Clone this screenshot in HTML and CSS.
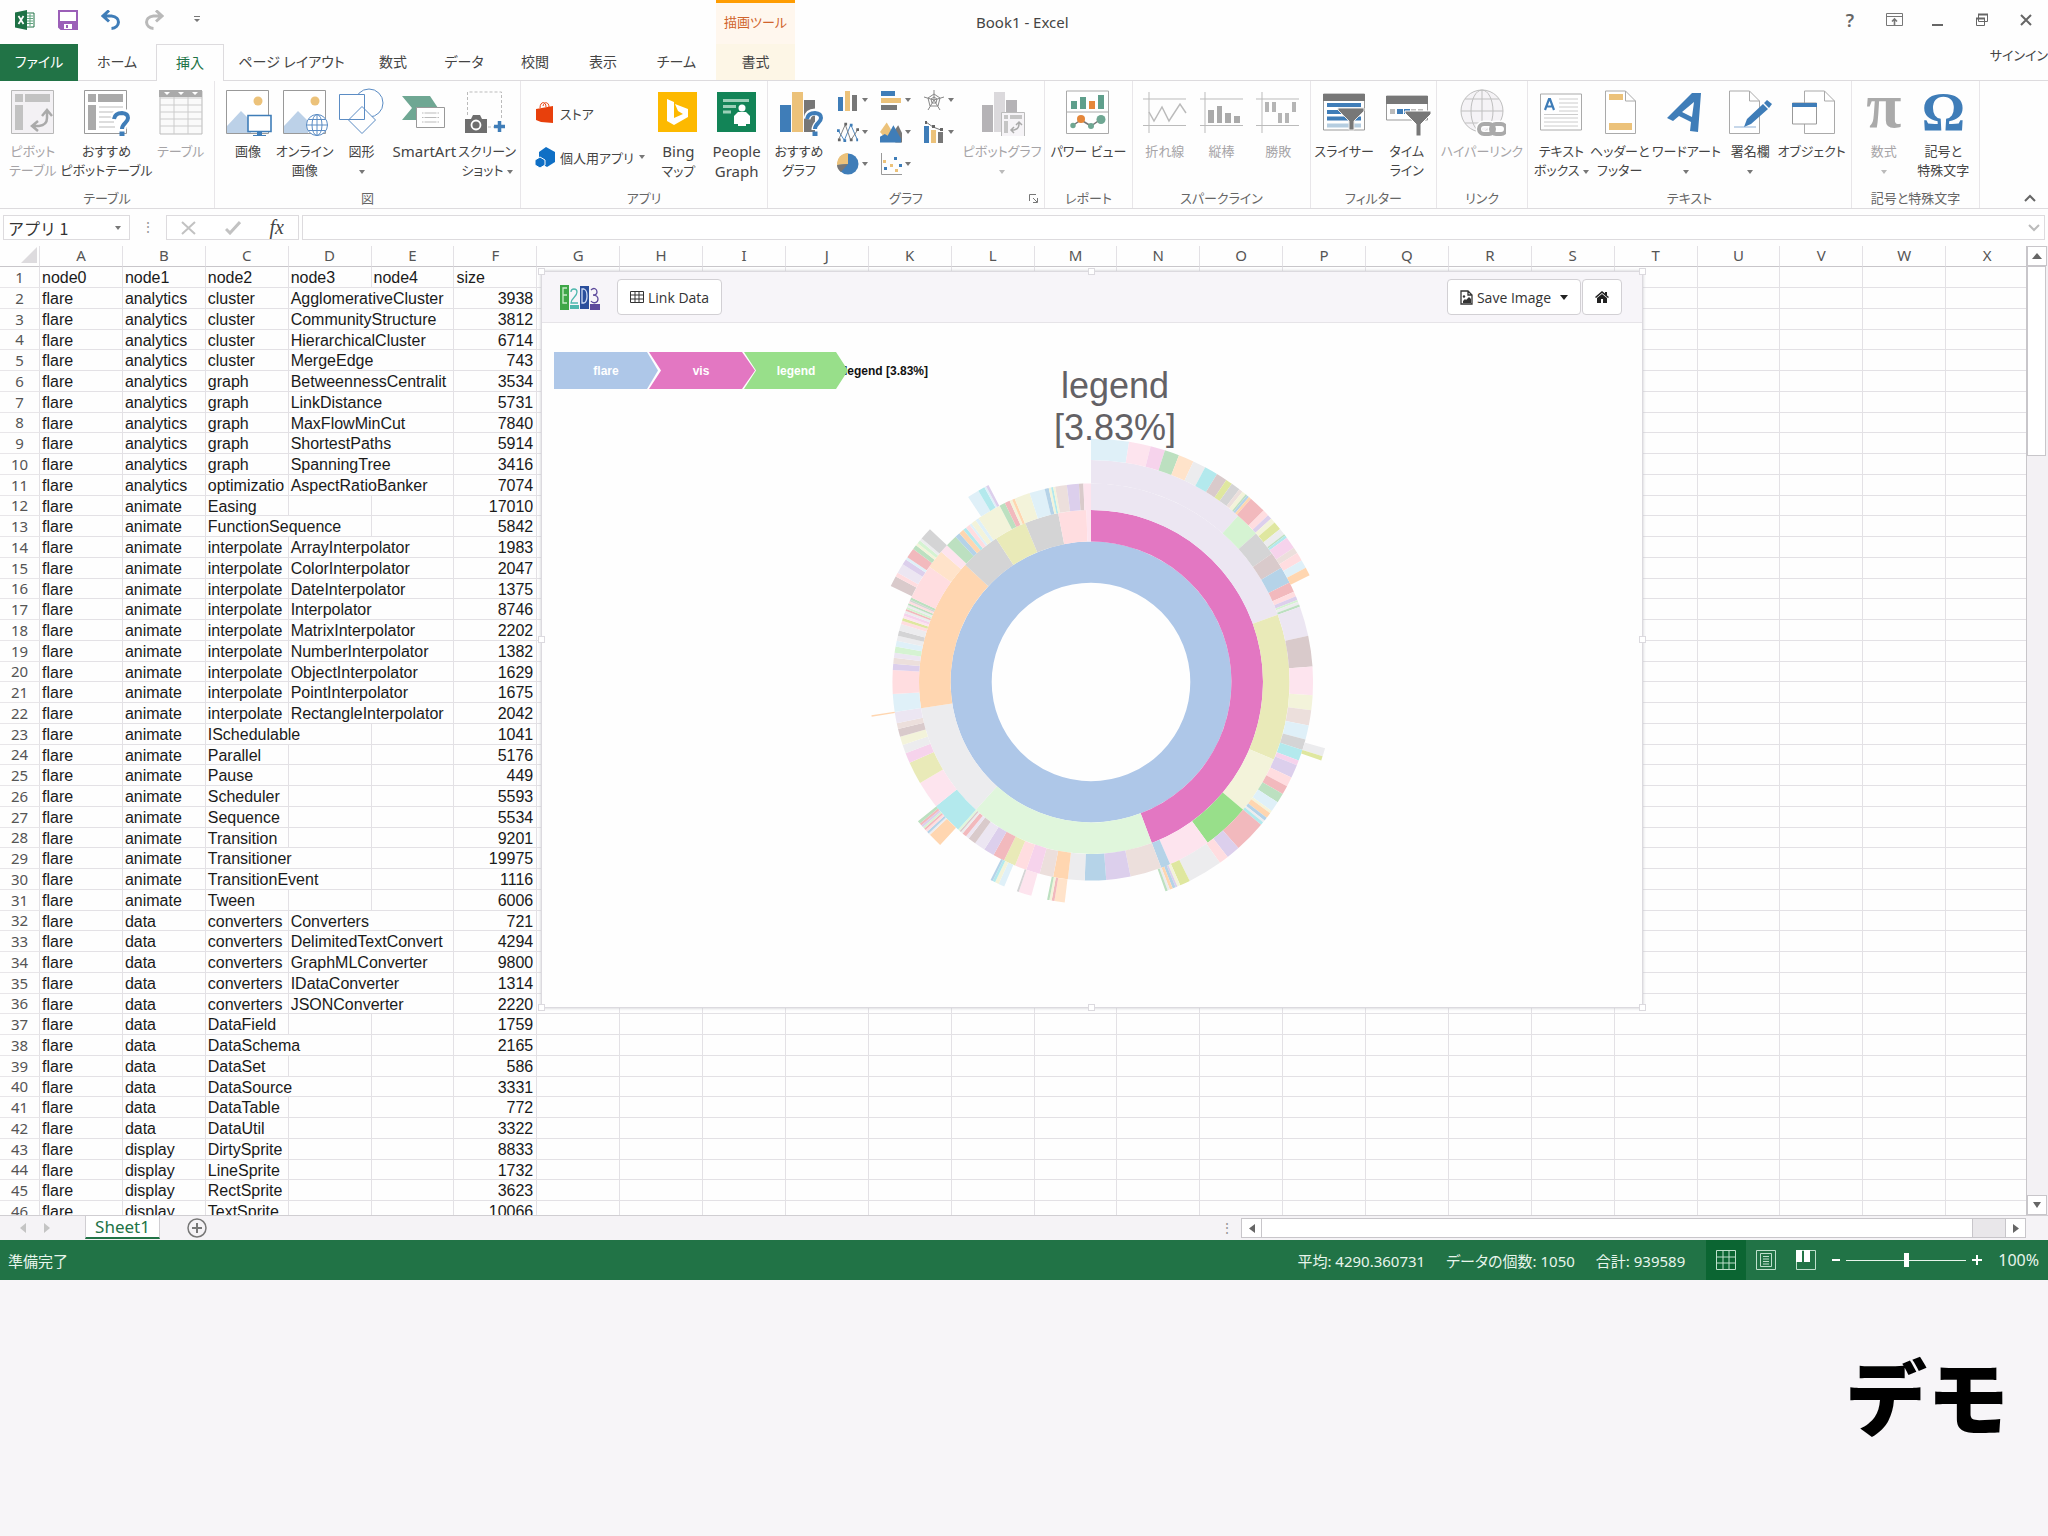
FILE: index.html
```html
<!DOCTYPE html>
<html lang="ja">
<head>
<meta charset="utf-8">
<title>Book1 - Excel</title>
<link rel="stylesheet" href="styles.css">
</head>
<body>
<div class="excel">
  <header class="titlebar">
    <div class="quick">
      <svg class="app-logo" width="20" height="20" viewBox="0 0 20 20"><path d="M11 3h8v14h-8z" fill="#fff" stroke="#217346"/><path d="M12 6h6M12 8.500h6M12 11h6M12 13.500h6M15 4v12" stroke="#5fa37e"/><path d="M0 2.500 12 0v20L0 17.500z" fill="#1e7145"/><path d="m3.500 6 5 8m0-8-5 8" stroke="#fff" stroke-width="1.700"/></svg>
      <button class="plain" aria-label="上書き保存"><svg width="20" height="20" viewBox="0 0 20 20"><path d="M1 1h18v18H3l-2-2z" fill="#fff" stroke="#9b5fb8" stroke-width="2"/><path d="M1 11h18v8H3l-2-2z" fill="#9b5fb8"/><path d="M6 14h8v5H6z" fill="#fff"/><path d="M8 15h2v3H8z" fill="#9b5fb8"/></svg></button>
      <button class="plain" aria-label="元に戻す"><svg width="20" height="20" viewBox="0 0 20 20" fill="none" stroke="#3f7db8" stroke-width="3"><path d="M2 6h8.500c10 1 8.500 12 0 12.500M8 0.500 2 6l6 5.500"/></svg></button>
      <button class="plain" aria-label="やり直し"><svg width="20" height="20" viewBox="0 0 20 20" fill="none" stroke="#b9b9b9" stroke-width="3"><path d="M18 6H9.500c-10 1-8.500 12 0 12.500M12 .500 18 6l-6 5.500"/></svg></button>
      <button class="plain" aria-label="カスタマイズ"><svg width="8" height="8" viewBox="0 0 8 8" fill="#777"><path d="M1 0h6v1H1zM1 3h6L4 6z"/></svg></button>
    </div>
    <div class="tool-title">描画ツール</div>
    <h1 class="doc-title">Book1 - Excel</h1>
    <div class="window-buttons">
      <button class="plain help" aria-label="ヘルプ">?</button>
      <button class="plain" aria-label="リボン表示"><svg width="17" height="14" viewBox="0 0 17 14" fill="none" stroke="#777"><path d="M.500.500h16v12H.500zM.500 3.500h16"/><path d="M8.500 12V6M6 8.500 8.500 6 11 8.500" stroke-width="1.600"/></svg></button>
      <button class="plain" aria-label="最小化"><svg width="14" height="14"><path d="M1 11h11v2H1z" fill="#666"/></svg></button>
      <button class="plain" aria-label="元に戻す (縮小)"><svg width="14" height="14" viewBox="0 0 14 14" fill="#fff" stroke="#666"><path d="M3.500 1.500h9v7h-9zM1.500 5.500h8v7h-8z"/><path d="M3 1.500h10M1 5.500h9" stroke-width="2"/></svg></button>
      <button class="plain" aria-label="閉じる"><svg width="14" height="14"><path d="m2 2 10 10M12 2 2 12" stroke="#666" stroke-width="2"/></svg></button>
    </div>
  </header>

  <nav class="tabs">
    <button class="tab file">ファイル</button>
    <button class="tab">ホーム</button>
    <button class="tab active">挿入</button>
    <button class="tab">ページ レイアウト</button>
    <button class="tab">数式</button>
    <button class="tab">データ</button>
    <button class="tab">校閲</button>
    <button class="tab">表示</button>
    <button class="tab">チーム</button>
    <button class="tab tool">書式</button>
    <a class="signin" href="#signin">サインイン</a>
  </nav>

  <div class="ribbon">
    <section class="group g-table">
      <div class="tools">
        <button class="tool-btn" disabled><svg class="icon" viewBox="0 0 48 48"><path d="M2.500 2.500h42v43h-42z" fill="#f3f1f4" stroke="#b8b8b8"/><path d="M6 6h8v8H6zM16 6h25v8H16zM6 17h8v25H6z" fill="#c2c2c2"/><path d="M24 38h6q8-1 8-8v-7M29 33l-6 5 6 5M33 28l5-6 5 6" fill="none" stroke="#aaa" stroke-width="2.500"/></svg>ピボット<br>テーブル</button>
        <button class="tool-btn"><svg class="icon" viewBox="0 0 48 48"><path d="M2.500 2.500h42v43h-42z" fill="#fff" stroke="#999"/><path d="M6 6h8v8H6zM16 6h25v8H16zM6 17h8v25H6z" fill="#aaa"/><path d="M17 19h24M17 24h24M17 29h15M17 34h15M17 39h16" stroke="#bbb"/><path d="M32 30q1-6 8-6 7 .500 7 6c0 5-6 5-6 10v1" fill="none" stroke="#fff" stroke-width="7"/><path d="M32 31q1-6 8-6 6 .500 6 5c0 5-6 5-6 11" fill="none" stroke="#3f7db8" stroke-width="4"/><path d="M37.500 43.500h5V48h-5z" fill="#3f7db8"/></svg>おすすめ<br>ピボットテーブル</button>
        <button class="tool-btn" disabled><svg class="icon" viewBox="0 0 48 48"><path d="M3 3h42v43H3z" fill="#fafafa" stroke="#bbb"/><path d="M3 10h42M3 17h42M3 24h42M3 31h42M3 38h42M17 9v37M31 9v37" stroke="#ccc"/><path d="M2 2h43v7H2z" fill="#aaa"/><path d="M7 4h6l-3 3zM21 4h6l-3 3zM35 4h6l-3 3z" fill="#fff"/></svg>テーブル</button>
      </div>
      <h2 class="group-name">テーブル</h2>
    </section>
    <section class="group g-image">
      <div class="tools">
        <button class="tool-btn"><svg class="icon" viewBox="0 0 48 48"><path d="M2.500 2.500h42v43h-42z" fill="#fff" stroke="#999"/><path d="M3 44V38l14-15 10 10v12H3z" fill="#bcd1e8"/><circle cx="34" cy="13" r="4.500" fill="#ecc27a"/><path d="M24 27.500h23v16H24z" fill="#fff" stroke="#3f7db8" stroke-width="1.600"/><path d="M33 44h5v3h4v1.500H29V47h4z" fill="#3f7db8"/></svg>画像</button>
        <button class="tool-btn"><svg class="icon" viewBox="0 0 48 48"><path d="M2.500 2.500h42v43h-42z" fill="#fff" stroke="#999"/><path d="M3 44V38l14-15 10 10v12H3z" fill="#bcd1e8"/><circle cx="34" cy="13" r="4.500" fill="#ecc27a"/><circle cx="36" cy="37" r="10.500" fill="#fff"/><g fill="none" stroke="#5b8cc4"><circle cx="36" cy="37" r="10.500"/><ellipse cx="36" cy="37" rx="5" ry="10.500"/><path d="M36 26v22M25.500 37h21M27.500 31.500h17M27.500 42.500h17"/></g></svg>オンライン<br>画像</button>
        <button class="tool-btn"><svg class="icon" viewBox="0 0 48 48" fill="#fff" stroke="#5b8cc4"><circle cx="31" cy="15" r="14"/><path d="M1.500 6.500h25v25h-25zM24 18.500l13.500 13.500L24 45.500 10.500 32z"/></svg>図形<br><i class="caret"></i></button>
        <button class="tool-btn"><svg class="icon" viewBox="0 0 48 48"><path d="M2 8h28l8 12-8 12H2l10-12z" fill="#6fa793"/><path d="M16.500 19.500h28v20h-28z" fill="#fff" stroke="#999"/><path d="M22 25h17M22 29.500h17M22 34h17" stroke="#bbb" stroke-dasharray="1.500 1 12 1"/></svg><span class="latin">SmartArt</span></button>
        <button class="tool-btn"><svg class="icon" viewBox="0 0 48 48"><path d="M38.500 30V4h-34v24M25 39h12" fill="none" stroke="#bbb" stroke-dasharray="3 2"/><path d="M2 31h6l2-4h7l2 4h5v14H2z" fill="#6e6e6e"/><circle cx="13" cy="37" r="4.500" fill="none" stroke="#fff" stroke-width="1.800"/><path d="M36.500 33v11M31 38.500h11" stroke="#3f7db8" stroke-width="3.500"/></svg>スクリーン<br>ショット <i class="caret"></i></button>
      </div>
      <h2 class="group-name">図</h2>
    </section>
    <section class="group g-app">
      <div class="tools">
        <div class="stack">
          <button class="line-btn"><svg width="20" height="24" viewBox="0 0 20 24"><path d="M1 8l17-3v17l-12-1-5-2z" fill="#e8400c"/><path d="M5 7c0-7 6-7 6-1M8 5c1-5 6-4 6 1" fill="none" stroke="#e8400c"/></svg>ストア</button>
          <button class="line-btn"><svg width="20" height="22" viewBox="0 0 20 22" fill="#0f6fc5"><path d="m11 1 9 5v10l-8 5-8-5V6z"/><path d="m5 11 5 3v5l-5 3-5-3v-5z" stroke="#fff"/></svg>個人用アプリ <i class="caret"></i></button>
        </div>
        <button class="tool-btn"><svg class="icon" viewBox="0 0 48 48"><path d="M4 4h39v40H4z" fill="#fdb900"/><path d="m13 11 7 3v16l9-4-5-3-3-7 13 5v8L20 37l-7-4z" fill="#fff"/></svg><span class="latin">Bing</span><br>マップ</button>
        <button class="tool-btn"><svg class="icon" viewBox="0 0 48 48"><path d="M4 4h39v40H4z" fill="#128457"/><path d="M10 11h26v3H10zM10 17h13v3H10zM10 22.500h8v3h-8z" fill="#9bd0b8"/><circle cx="29" cy="20" r="3.500" fill="#fff"/><path d="M25 24h8l4 4v8h-4v2h-8v-2h-4v-8z" fill="#fff"/></svg><span class="latin">People<br>Graph</span></button>
      </div>
      <h2 class="group-name">アプリ</h2>
    </section>
    <section class="group g-chart">
      <div class="tools">
        <button class="tool-btn"><svg class="icon" viewBox="0 0 48 48"><path d="M5 17h11v27H5z" fill="#3f7db8"/><path d="M17 4h11v40H17z" fill="#ecc27a"/><path d="M29 12h11v32H29z" fill="#777"/><path d="M32 31q1-7 8-7 7 .500 6 6c0 5-6 5-6 12" fill="none" stroke="#fff" stroke-width="7"/><path d="M32 31q1-6 8-6 6 .500 6 5c0 5-6 5-6 11" fill="none" stroke="#3f7db8" stroke-width="4"/><path d="M37.500 43.500h5V48h-5z" fill="#3f7db8"/></svg>おすすめ<br>グラフ</button>
        <div class="mini-grid">
          <button class="mini" aria-label="縦棒"><svg width="22" height="22"><path d="M1 8h5v14H1z" fill="#3f7db8"/><path d="M8 2h5v20H8z" fill="#ecc27a"/><path d="M15 6h5v16h-5z" fill="#777"/></svg><i class="caret"></i></button>
          <button class="mini" aria-label="横棒"><svg width="22" height="22"><path d="M1 2h14v5H1z" fill="#3f7db8"/><path d="M1 9h20v5H1z" fill="#ecc27a"/><path d="M1 16h16v5H1z" fill="#777"/></svg><i class="caret"></i></button>
          <button class="mini" aria-label="レーダー"><svg width="22" height="22" fill="none" stroke="#888"><path d="M11 1v10L1 8M11 11l10-3M11 11l6 10M11 11 5 21M11 5l6 4-2 8H7L5 9zM11 8l3 2-1 4H9l-1-4z"/></svg><i class="caret"></i></button>
          <button class="mini" aria-label="折れ線"><svg width="22" height="22" viewBox="0 0 24 22" fill="none"><path d="m1 9 7 11 7-17 7 16" stroke="#3f7db8"/><path d="m2 19 7-16 6 17 8-12" stroke="#777"/><path d="M0 8h3v3H0zM7 19h3v3H7zM14 2h3v3h-3zM21 18h2v3h-2z" fill="#3f7db8"/><path d="M1 18h3v3H1zM8 1h3v3H8zM14 18h3v3h-3zM21 7h3v3h-3z" fill="#666"/></svg><i class="caret"></i></button>
          <button class="mini" aria-label="面"><svg width="22" height="22" viewBox="0 0 23 22"><path d="m16 8 3-4 4 8v10h-7z" fill="#777"/><path d="m0 11 7-10 6 10-6 8z" fill="#ecc27a"/><path d="M0 22v-6l5-3 3 2 6-11 8 14v4z" fill="#3f7db8"/></svg><i class="caret"></i></button>
          <button class="mini" aria-label="複合"><svg width="22" height="22"><path d="M1 5h5v17H1z" fill="#3f7db8"/><path d="M8 9h5v13H8z" fill="#ecc27a"/><path d="M15 11h5v11h-5z" fill="#777"/><path d="m3 1 7 5 8 3" stroke="#777" fill="none"/><path d="M2 0h2v3H2zM9 4h3v3H9zM17 7h3v3h-3z" fill="#666"/></svg><i class="caret"></i></button>
          <button class="mini" aria-label="円"><svg width="22" height="22"><circle cx="11" cy="11" r="10.500" fill="#3f7db8"/><path d="M11 11V0A11 11 0 0 0 0 12z" fill="#ecc27a"/><path d="M11 11 0 12q0 4 4 7z" fill="#777"/></svg><i class="caret"></i></button>
          <button class="mini" aria-label="散布図"><svg width="22" height="22"><path d="M1.500 0v21.500H22" stroke="#999" fill="none"/><path d="M14 4h3v3h-3zM4 14h3v3H4zM19 11h3v3h-3z" fill="#3f7db8"/><path d="M3 7h3v3H3zM10 11h3v3h-3zM15 16h3v3h-3z" fill="#ecc27a"/></svg><i class="caret"></i></button>
        </div>
        <button class="tool-btn" disabled><svg class="icon" viewBox="0 0 48 48"><path d="M4 17h11v27H4z" fill="#b5b3b6"/><path d="M16 4h11v40H16z" fill="#dbd9dc"/><path d="M28 12h11v14H28z" fill="#b5b3b6"/><path d="M23.500 24.500h23v24h-23z" fill="#f6f4f7" stroke="#bbb"/><path d="M26 27h4v4h-4zM32 27h12v4H32zM26 33h4v12h-4z" fill="#c5c5c5"/><path d="M33 42h3q5-1 5-6v-1M36 39l-3 3 3 3M38 37l3-3 3 3" fill="none" stroke="#aaa" stroke-width="1.500"/></svg>ピボットグラフ<br><i class="caret"></i></button>
      </div>
      <h2 class="group-name">グラフ</h2>
      <button class="plain launcher" aria-label="すべてのグラフ"><svg width="9" height="9" viewBox="0 0 9 9" fill="none" stroke="#777"><path d="M.500 7V.500H7M4 4l4 4M8.500 4v4.500H4"/></svg></button>
    </section>
    <section class="group g-report">
      <div class="tools">
        <button class="tool-btn"><svg class="icon" viewBox="0 0 48 48"><path d="M2.500 3h42v42.500h-42zM2.500 24h42" fill="#fff" stroke="#aaa"/><path d="M7 13h6v8H7zM16 9h6v12h-6zM34 7h6v14h-6z" fill="#5f9f8c"/><path d="M25 13h6v8h-6z" fill="#e5873a"/><path d="m8 38 9-6 10 6 10-7" fill="none" stroke="#777" stroke-width="1.500"/><g fill="#6fa793"><circle cx="9" cy="37.500" r="2.700"/><circle cx="27" cy="38" r="3"/><circle cx="37" cy="31.500" r="4.500"/></g><circle cx="17" cy="31" r="4" fill="#e5873a"/></svg>パワー ビュー</button>
      </div>
      <h2 class="group-name">レポート</h2>
    </section>
    <section class="group g-spark">
      <div class="tools">
        <button class="tool-btn" disabled><svg class="icon" viewBox="0 0 48 48" fill="none" stroke="#bbb"><path d="M2 11h43M2 37.500h43M8 4v41"/><path d="m8 24 5 9 8-14 7 14 11-17 6 9" stroke-width="1.500"/></svg>折れ線</button>
        <button class="tool-btn" disabled><svg class="icon" viewBox="0 0 48 48"><path d="M3 11h43M3 37.500h43M8 4v41" stroke="#bbb"/><path d="M11 22h6v13h-6zM20 18h5v17h-5zM28 25h6v10h-6zM37 28h6v7h-6z" fill="#aaa"/></svg>縦棒</button>
        <button class="tool-btn" disabled><svg class="icon" viewBox="0 0 48 48"><path d="M2 11h43M2 37.500h43M8 4v41" stroke="#bbb"/><path d="M11 14h4v10h-4zM18 14h4v10h-4zM24 25h4v10h-4zM31 25h4v10h-4zM38 14h4v10h-4z" fill="#b5b5b5"/></svg>勝敗</button>
      </div>
      <h2 class="group-name">スパークライン</h2>
    </section>
    <section class="group g-filter">
      <div class="tools">
        <button class="tool-btn"><svg class="icon" viewBox="0 0 48 48"><path d="M3.500 6h41v36h-41z" fill="#fff" stroke="#999"/><path d="M3 6h42v7H3z" fill="#777"/><path d="M7 15h34v4H7zM7 22h34v4H7zM7 28.500h34v4H7z" fill="#3f7db8"/><path d="M7 35.500h34v4H7z" fill="#b5cde0"/><path d="M18 20h26v3L34 33v9h-5v-9L18 22z" fill="#777" stroke="#e8e8e8"/></svg>スライサー</button>
        <button class="tool-btn"><svg class="icon" viewBox="0 0 48 48"><path d="M3.500 8h41v24h-41z" fill="#fff" stroke="#999"/><path d="M3 8h42v8H3z" fill="#777"/><path d="M7 21h5v5H7zM28 21h5v5h-5zM35 21h5v5h-5z" fill="#bbb"/><path d="M14 21h6v5h-6zM21 21h6v5h-6z" fill="#3f7db8"/><path d="M22 23h26v3L38 36v12h-5V36L22 25z" fill="#777" stroke="#fff"/></svg>タイム<br>ライン</button>
      </div>
      <h2 class="group-name">フィルター</h2>
    </section>
    <section class="group g-link">
      <div class="tools">
        <button class="tool-btn" disabled><svg class="icon" viewBox="0 0 48 48"><g fill="none" stroke="#bfbfbf"><circle cx="24" cy="23" r="21" fill="#f5f3f6"/><ellipse cx="24" cy="23" rx="11" ry="21"/><path d="M24 2v42M3 23h42M7 11h34M7 35h34"/></g><g fill="none" stroke="#fff" stroke-width="7"><rect x="21" y="36" width="15" height="10" rx="5"/><rect x="33" y="36" width="15" height="10" rx="5"/></g><g fill="none" stroke="#aaa" stroke-width="4"><rect x="21" y="36" width="15" height="10" rx="5"/><rect x="33" y="36" width="15" height="10" rx="5"/></g></svg>ハイパーリンク</button>
      </div>
      <h2 class="group-name">リンク</h2>
    </section>
    <section class="group g-text">
      <div class="tools">
        <button class="tool-btn"><svg class="icon" viewBox="0 0 48 48"><path d="M3.500 6h41v36h-41z" fill="#fff" stroke="#aaa"/><path d="M22 11h19M22 15h19M22 19h19M22 23h19M7 26.500h34M7 30h34M7 34h34M7 38h34" stroke="#ccc"/><path d="m8 22 4-11h1l4 11M9.500 18.500h6" fill="none" stroke="#3f7db8" stroke-width="2.200"/></svg>テキスト<br>ボックス <i class="caret"></i></button>
        <button class="tool-btn"><svg class="icon" viewBox="0 0 48 48"><path d="M9.500 3h20l10 10v32.500h-30z" fill="#fff" stroke="#aaa"/><path d="M29.500 3v10h10" fill="none" stroke="#aaa"/><path d="M13 6h14v6H13zM13 35h23v7H13z" fill="#ecc27a"/></svg>ヘッダーと<br>フッター</button>
        <button class="tool-btn"><svg class="icon" viewBox="0 0 48 48"><path d="M5 30 30 5h9l-3 39-8-1 1-9-12-6-6 5zM20 24l10 5 2-15z" fill="#3f7db8" fill-rule="evenodd"/></svg>ワードアート<br><i class="caret"></i></button>
        <button class="tool-btn"><svg class="icon" viewBox="0 0 48 48"><path d="M3.500 3h20l10 10v32.500h-30z" fill="#fff" stroke="#aaa"/><path d="M23.500 3v10h10" fill="none" stroke="#aaa"/><path d="M8 39h22" stroke="#8fb0d5"/><path d="m18 39 3-8 16-15 5 5-17 15zM38 15l3-3 5 4-3 4z" fill="#3f7db8"/></svg>署名欄<br><i class="caret"></i></button>
        <button class="tool-btn"><svg class="icon" viewBox="0 0 48 48"><path d="M16.500 3h20l10 10v32.500h-30z" fill="#fff" stroke="#aaa"/><path d="M36.500 3v10h10" fill="none" stroke="#aaa"/><path d="M4.500 15h24v21h-24z" fill="#fff" stroke="#999"/><path d="M4 15h25v4H4z" fill="#3f7db8"/></svg>オブジェクト</button>
      </div>
      <h2 class="group-name">テキスト</h2>
    </section>
    <section class="group g-symbol">
      <div class="tools">
        <button class="tool-btn" disabled><span class="glyph">π</span>数式<br><i class="caret"></i></button>
        <button class="tool-btn"><span class="glyph omega">Ω</span>記号と<br>特殊文字</button>
      </div>
      <h2 class="group-name">記号と特殊文字</h2>
    </section>
    <div class="collapse"><button class="plain" aria-label="リボンを折りたたむ"><svg width="12" height="8"><path d="m1 7 5-5 5 5" fill="none" stroke="#666" stroke-width="2"/></svg></button></div>
  </div>

  <div class="formula-bar">
    <div class="name-box"><input class="name-input" aria-label="名前ボックス" value="アプリ 1"><i class="caret"></i></div>
    <span class="grip">⋮</span>
    <div class="fx-box">
      <button class="plain" aria-label="キャンセル"><svg width="15" height="14"><path d="m1 1 13 12M14 1 1 13" stroke="#c2c2c2" stroke-width="2"/></svg></button>
      <button class="plain" aria-label="入力"><svg width="16" height="14"><path d="m1 8 4 4L15 1" fill="none" stroke="#c2c2c2" stroke-width="3"/></svg></button>
      <button class="plain fx" aria-label="関数の挿入">fx</button>
    </div>
    <div class="formula"><input class="formula-input" aria-label="数式バー"><svg width="12" height="8"><path d="m1 1 5 5 5-5" fill="none" stroke="#bbb" stroke-width="2"/></svg></div>
  </div>

  <div class="sheet-area">
    <div class="sheet">
      <table class="grid">
        <thead id="columns"></thead>
        <tbody id="rows"></tbody>
      </table>
      <div class="chart">
        <div class="chart-bar">
          <svg class="e2d3" width="40" height="26" viewBox="0 0 40 26"><path d="M0 1h9v25H0z" fill="#3fa648"/><path d="M10 21h9v4h-9z" fill="#4fb8ae"/><path d="M20 2h9v23h-9z" fill="#2b4f9c"/><path d="M30 20h10v6H30z" fill="#5d4a9c"/><g fill="none" stroke-width="1.300"><path d="M7 4H3v15h4M3 11h4" stroke="#c8ecc8"/><path d="M11 8c0-4 6-4 6 0 0 5-6 6-6 11h7" stroke="#4fb8ae"/><path d="M22 5h2q3 1 3 7t-3 7h-2z" stroke="#cfdcf5"/><path d="M31 6c3-3 6-1 6 2s-2 3-4 3c3 0 5 2 5 4 0 4-5 5-7 2" stroke="#5d4a9c"/></g></svg>
          <button class="chart-btn"><svg width="14" height="12" viewBox="0 0 14 12" fill="none" stroke="#333"><path d="M.500.500h13v11H.500zM.500 4h13M.500 8h13M5 0v12M9 0v12"/></svg>Link Data</button>
          <div class="chart-actions">
            <button class="chart-btn"><svg width="13" height="15" viewBox="0 0 13 15"><path d="M1 1h7l4 4v9H1zM8 1v4h4" fill="none" stroke="#333" stroke-width="1.300"/><path d="M3 13v-2l2-2 1 1 3-3 2 2v4z" fill="#333"/><circle cx="4" cy="6.500" r="1.200" fill="#333"/></svg>Save Image<i class="caret big"></i></button>
            <button class="chart-btn home" aria-label="ホーム"><svg width="14" height="12" viewBox="0 0 14 12" fill="#222"><path d="m7 0 3 2.600V1h2v3.500L14 6l-1 1-6-5-6 5-1-1z"/><path d="m2 7 5-4 5 4v5H8V8H6v4H2z"/></svg></button>
          </div>
        </div>
        <svg class="plot" viewBox="0 0 1100 684" role="img" aria-label="サンバースト">
          <g id="sunburst"></g>
          <text class="crumb total" x="302" y="52">legend [3.83%]</text>
          <path d="M12 29h93l11 18.500L105 66H12z" fill="#aec7e8"/>
          <path d="M107 29h93l13 18.500L200 66h-93l12-18.500z" fill="#e377c2"/>
          <path d="M202 29h92l12 18.500L294 66h-92l12-18.500z" fill="#98df8a"/>
          <text class="crumb" x="64" y="52">flare</text>
          <text class="crumb" x="159" y="52">vis</text>
          <text class="crumb" x="254" y="52">legend</text>
          <text class="focus" x="573" y="75">legend</text>
          <text class="focus" x="573" y="117">[3.83%]</text>
        </svg>
        <i class="handle nw"></i><i class="handle n"></i><i class="handle ne"></i><i class="handle w"></i><i class="handle e"></i><i class="handle sw"></i><i class="handle s"></i><i class="handle se"></i>
      </div>
    </div>
    <div class="vscroll">
      <button class="arrow-btn" aria-label="上へ"><svg width="10" height="6"><path d="M0 6h10L5 0z" fill="#666"/></svg></button>
      <div class="vthumb"></div>
      <button class="arrow-btn last" aria-label="下へ"><svg width="8" height="6"><path d="M0 0h8L4 6z" fill="#666"/></svg></button>
    </div>
  </div>

  <div class="sheet-tabs">
    <div class="sheet-nav"><svg width="6" height="10"><path d="M6 0v10L0 5z" fill="#c4c4c4"/></svg><svg width="6" height="10"><path d="M0 0v10l6-5z" fill="#c4c4c4"/></svg></div>
    <button class="sheet-tab">Sheet1</button>
    <button class="plain add" aria-label="新しいシート"><svg width="20" height="20" fill="none" stroke="#777"><circle cx="10" cy="10" r="9" stroke-width="1.500"/><path d="M10 5v10M5 10h10" stroke-width="2"/></svg></button>
    <span class="grip">⋮</span>
    <div class="hscroll">
      <button class="arrow-btn" aria-label="左へ"><svg width="6" height="9"><path d="M6 0v9L0 4.500z" fill="#666"/></svg></button>
      <div class="hthumb"></div>
      <button class="arrow-btn last" aria-label="右へ"><svg width="6" height="9"><path d="M0 0v9l6-4.500z" fill="#666"/></svg></button>
    </div>
  </div>

  <footer class="status">
    <span class="ready">準備完了</span>
    <span>平均: 4290.360731</span>
    <span>データの個数: 1050</span>
    <span>合計: 939589</span>
    <div class="view-tools">
      <button class="view on" aria-label="標準"><svg width="20" height="20" fill="none" stroke="#bfe0cc"><path d="M.500.500h19v19H.500zM.500 7h19M.500 13h19M7 0v20M13 0v20"/></svg></button>
      <button class="view" aria-label="ページ レイアウト"><svg width="20" height="20" fill="none" stroke="#bfe0cc"><path d="M.500.500h19v19H.500zM4.500 3.500h11v13h-11zM7 6.500h6M7 9h6M7 11.500h6M7 14h6"/></svg></button>
      <button class="view" aria-label="改ページ"><svg width="20" height="20" fill="none" stroke="#bfe0cc"><path d="M.500.500h19v19H.500z"/><path d="M0 0h6v12H0zM8 0h6v12H8z" fill="#fff" stroke="none"/></svg></button>
      <button class="zoom-btn" aria-label="縮小"><svg width="8" height="10"><path d="M0 4h8v2H0z" fill="#fff"/></svg></button>
      <input class="zoom" type="range" min="0" max="100" value="50" aria-label="ズーム">
      <button class="zoom-btn" aria-label="拡大"><svg width="10" height="10"><path d="M4 0h2v4h4v2H6v4H4V6H0V4h4z" fill="#fff"/></svg></button>
      <span class="percent">100%</span>
    </div>
  </footer>
</div>
<p class="caption">デモ</p>
<script src="script.js"></script>
</body>
</html>
```
FILE: styles.css
```css
* { box-sizing: border-box; }
body {
  margin: 0;
  background: #f7f5f8;
  color: #444;
  font-family: "Noto Sans", "Noto Sans CJK JP", sans-serif;
  font-size: 14px;
  font-feature-settings: "palt";
}
button, input { font: inherit; font-feature-settings: inherit; color: inherit; }
h1, h2, p { margin: 0; font-weight: 400; }
svg { display: block; flex: none; }
.plain { border: 0; padding: 0; background: none; display: flex; align-items: center; justify-content: center; }
.excel { background: #fefefe; overflow: hidden; }

/* title bar */
.titlebar { display: grid; grid-template-columns: 716px 79px 1fr auto; height: 44px; }
.quick { display: flex; align-items: center; gap: 23px; padding: 0 0 4px 15px; }
.quick .plain:last-child { margin-left: 6px; }
.tool-title { border-top: 3px solid #ff9c00; background: #fff7ee; color: #d0642c; text-align: center; line-height: 38px; font-size: 13px; white-space: nowrap; }
.doc-title { padding-left: 181px; font-size: 15px; line-height: 44px; }
.window-buttons { display: flex; align-items: center; gap: 12px; padding: 0 6px 4px 0; }
.window-buttons .plain { width: 32px; height: 24px; }
.window-buttons .help { font-size: 18px; font-weight: 600; color: #666; }

/* ribbon tabs */
.tabs { display: flex; height: 37px; border-bottom: 1px solid #dddbde; }
.tab { border: 0; background: none; padding: 0 0 3px; height: 37px; width: 68px; flex: none; white-space: nowrap; }
.tab:nth-child(1), .tab:nth-child(2) { width: 78px; }
.tab:nth-child(4) { width: 135px; }
.tab:nth-child(6) { width: 74px; }
.tab:nth-child(9), .tab:nth-child(10) { width: 79px; }
.tab.file { background: #217346; color: #fff; }
.tab.active { background: #fefefe; color: #217346; border: 1px solid #dddbde; border-bottom: 0; }
.tab.tool { height: 36px; background: #fdf6e6; }
.signin { margin-left: auto; color: #444; text-decoration: none; line-height: 22px; font-size: 13px; white-space: nowrap; }

/* ribbon */
.ribbon {
  display: grid;
  grid-template-columns: 215fr 306fr 247fr 277fr 88fr 178fr 126fr 91fr 324fr 128fr 68fr;
  grid-template-rows: 100%;
  height: 128px;
  border-bottom: 1px solid #dddbde;
  font-size: 13px;
}
.group { position: relative; display: flex; flex-direction: column; min-width: 0; border-right: 1px solid #e8e6e9; }
.tools { display: grid; flex: 1; }
.g-table .tools { grid-template-columns: 66fr 82fr 67fr; }
.g-image .tools { grid-template-columns: 66fr 48fr 66fr 60fr 66fr; }
.g-app .tools { grid-template-columns: 130fr 56fr 61fr; }
.g-chart .tools { grid-template-columns: 65fr 130fr 76fr 6fr; }
.g-spark .tools { grid-template-columns: 64fr 50fr 64fr; }
.g-filter .tools { grid-template-columns: 67fr 59fr; }
.g-text .tools { grid-template-columns: 67fr 50fr 84fr 44fr 79fr; }
.g-symbol .tools { grid-template-columns: 64fr 56fr 8fr; }
.tool-btn {
  display: flow-root; align-self: start; justify-self: center;
  width: max-content; margin: 0 -30px; padding: 7px 0 0;
  border: 0; background: none;
  line-height: 19px; white-space: nowrap; text-align: center;
}
.tool-btn:disabled { color: #a6a4a7; }
.tool-btn:disabled .caret { opacity: .5; }
.latin { font-size: 15px; }
.icon { width: 48px; height: 48px; margin: 0 auto 6px; }
.glyph { display: block; height: 48px; margin-bottom: 6px; font: 700 64px/36px "Liberation Serif", serif; color: #aaa; }
.glyph.omega { color: #3f7db8; font-size: 54px; line-height: 48px; }
.caret { display: inline-block; border: 3px solid transparent; border-top: 4px solid #777; border-bottom: 0; vertical-align: middle; flex: none; }
.caret.big { border-width: 5px 4px 0; border-top-color: #222; }
.group-name { font-size: 13px; line-height: 20px; text-align: center; color: #666; }
.stack { display: flex; flex-direction: column; padding: 17px 0 0 14px; gap: 14px; }
.line-btn { display: flex; align-items: center; gap: 5px; height: 30px; border: 0; padding: 0; background: none; white-space: nowrap; }
.mini-grid { display: grid; grid-template-columns: repeat(3, 43px); grid-template-rows: repeat(3, 32px); padding: 3px 0 0 7px; align-content: start; }
.mini { display: flex; align-items: center; gap: 3px; border: 0; padding: 0; background: none; }
.launcher { position: absolute; right: 6px; bottom: 5px; }
.collapse { display: flex; align-items: flex-end; justify-content: flex-end; padding: 0 12px 6px 0; }

/* formula bar */
.formula-bar { display: flex; height: 37px; padding: 6px 3px 6px 3px; }
.name-box, .fx-box, .formula { display: flex; align-items: center; border: 1px solid #dddbde; background: #fff; }
.name-box { width: 127px; padding-right: 8px; }
.name-input { width: 100%; min-width: 0; border: 0; padding: 0 4px; background: none; font: 16px/22px "Noto Sans CJK JP", sans-serif; font-feature-settings: normal; color: #333; }
.grip { color: #999; width: 36px; text-align: center; line-height: 24px; }
.fx-box { width: 133px; justify-content: space-between; padding: 0 14px; }
.fx { font: italic 20px "Liberation Serif", serif; color: #444; }
.formula { flex: 1; margin-left: 3px; padding-right: 4px; }
.formula-input { flex: 1; border: 0; padding: 0 4px; background: none; }

/* sheet */
.sheet-area { display: flex; height: 970px; border-bottom: 1px solid #d0ced2; }
.sheet { position: relative; flex: 1; min-width: 0; overflow: hidden; }
.grid { width: calc(100% + 3px); table-layout: fixed; border-collapse: separate; border-spacing: 0; }
.grid th { padding: 0; font-weight: 400; font-size: 15px; line-height: 20px; text-align: center; color: #555; border-right: 1px solid #e3e1e5; border-bottom: 1px solid #e8e6e9; }
.grid thead th { padding-bottom: 2px; line-height: 18px; border-bottom-color: #c8c6ca; }
.grid .corner { width: 40px; }
.corner svg { margin-left: auto; margin-right: 2px; }
.grid td { padding: 2px 2px 0; overflow: hidden; white-space: nowrap; font: 16px/18px "Liberation Sans", sans-serif; color: #1a1a1a; border-right: 1px solid #e3e1e5; border-bottom: 1px solid #e3e1e5; }
.grid tbody tr:nth-child(4n) th { line-height: 19px; }
.grid tbody tr:nth-child(4n) td { line-height: 17px; }
.grid td.num { text-align: right; padding-right: 3px; }

/* chart object placed on the sheet */
.chart { position: absolute; left: 541px; top: 25px; width: 1102px; border: 1px solid #dcdadf; background: #fefefe; box-shadow: 0 0 3px #c9c7cc; }
.chart-bar { display: flex; align-items: center; height: 51px; padding: 0 20px 0 18px; background: #f7f5f9; border-bottom: 1px solid #e6e4e8; }
.e2d3 { margin-right: 17px; }
.chart-btn { display: flex; align-items: center; gap: 4px; height: 36px; padding: 0 12px; border: 1px solid #d2d0d4; border-radius: 4px; background: #fff; font-family: "Open Sans", sans-serif; font-size: 14px; color: #333; }
.chart-btn .big { margin-left: 5px; }
.chart-actions { display: flex; gap: 1px; margin-left: auto; }
.plot { width: 100%; }
.crumb { font: 700 12px "Liberation Sans", sans-serif; fill: #fff; text-anchor: middle; }
.crumb.total { fill: #111; text-anchor: start; }
.focus { font: 36px "Liberation Sans", sans-serif; fill: #636165; text-anchor: middle; }
.handle { position: absolute; width: 7px; height: 7px; background: #fff; border: 1px solid #dcdadf; }
.nw, .n, .ne { top: -4px; }
.sw, .s, .se { bottom: -4px; }
.w, .e { top: calc(50% - 4px); }
.nw, .w, .sw { left: -4px; }
.ne, .e, .se { right: -4px; }
.n, .s { left: calc(50% - 4px); }

/* scroll bars */
.vscroll { display: flex; flex-direction: column; width: 22px; padding-right: 2px; background: #f3f1f4; border-left: 1px solid #c8c6ca; }
.arrow-btn { display: flex; align-items: center; justify-content: center; width: 20px; height: 20px; padding: 0; border: 1px solid #c8c6ca; background: #fff; flex: none; }
.vthumb { height: 190px; background: #fff; border: 1px solid #c8c6ca; }
.vscroll .last { margin-top: auto; }
.hscroll { display: flex; width: 785px; margin: 2px 22px 2px 0; background: #e9e7ea; border: 1px solid #c8c6ca; }
.hscroll .arrow-btn { height: auto; border-width: 0 1px 0 0; }
.hthumb { width: 711px; background: #fff; border-right: 1px solid #c8c6ca; }
.hscroll .last { margin-left: auto; border-width: 0 0 0 1px; }

/* sheet tabs */
.sheet-tabs { display: flex; height: 24px; background: #f5f3f6; }
.sheet-nav { display: flex; align-items: center; gap: 18px; width: 85px; padding-left: 20px; }
.sheet-tab { width: 75px; height: 23px; padding: 0; border: 1px solid #d0ced2; border-width: 0 1px 2px; border-bottom-color: #217346; background: #fff; color: #217346; font-size: 17px; line-height: 20px; }
.add { width: 74px; }
.sheet-tabs .grip { margin-left: auto; width: 28px; }

/* status bar */
.status { display: flex; align-items: center; gap: 21px; height: 40px; padding: 0 9px 0 8px; background: #217346; color: #e8f5ec; font-size: 15px; white-space: nowrap; }
.ready { margin-right: auto; font-size: 15px; }
.view-tools { display: flex; align-items: center; }
.view { display: flex; align-items: center; justify-content: center; width: 40px; height: 40px; border: 0; background: none; padding: 0; }
.view.on { background: #0b6532; }
.zoom-btn { display: flex; border: 0; padding: 0 6px; background: none; }
.zoom { appearance: none; width: 120px; height: 20px; margin: 0; background: linear-gradient(#e8f5ec, #e8f5ec) center / 100% 1px no-repeat; }
.zoom::-webkit-slider-thumb { appearance: none; width: 5px; height: 14px; background: #fff; }
.percent { margin-left: 10px; font-size: 16px; }

.caption { padding: 54px 39px 0 0; text-align: right; font: 900 82px/120px "Noto Sans CJK JP", sans-serif; color: #000; }
```
FILE: script.js
```js
const columns = 'ABCDEFGHIJKLMNOPQRSTUVWX'.split('');

// [node1, node2, node3, size]
const data = [
  ['analytics', 'cluster', 'AgglomerativeCluster', 3938],
  ['analytics', 'cluster', 'CommunityStructure', 3812],
  ['analytics', 'cluster', 'HierarchicalCluster', 6714],
  ['analytics', 'cluster', 'MergeEdge', 743],
  ['analytics', 'graph', 'BetweennessCentralit', 3534],
  ['analytics', 'graph', 'LinkDistance', 5731],
  ['analytics', 'graph', 'MaxFlowMinCut', 7840],
  ['analytics', 'graph', 'ShortestPaths', 5914],
  ['analytics', 'graph', 'SpanningTree', 3416],
  ['analytics', 'optimizatio', 'AspectRatioBanker', 7074],
  ['animate', 'Easing', '', 17010],
  ['animate', 'FunctionSequence', '', 5842],
  ['animate', 'interpolate', 'ArrayInterpolator', 1983],
  ['animate', 'interpolate', 'ColorInterpolator', 2047],
  ['animate', 'interpolate', 'DateInterpolator', 1375],
  ['animate', 'interpolate', 'Interpolator', 8746],
  ['animate', 'interpolate', 'MatrixInterpolator', 2202],
  ['animate', 'interpolate', 'NumberInterpolator', 1382],
  ['animate', 'interpolate', 'ObjectInterpolator', 1629],
  ['animate', 'interpolate', 'PointInterpolator', 1675],
  ['animate', 'interpolate', 'RectangleInterpolator', 2042],
  ['animate', 'ISchedulable', '', 1041],
  ['animate', 'Parallel', '', 5176],
  ['animate', 'Pause', '', 449],
  ['animate', 'Scheduler', '', 5593],
  ['animate', 'Sequence', '', 5534],
  ['animate', 'Transition', '', 9201],
  ['animate', 'Transitioner', '', 19975],
  ['animate', 'TransitionEvent', '', 1116],
  ['animate', 'Tween', '', 6006],
  ['data', 'converters', 'Converters', 721],
  ['data', 'converters', 'DelimitedTextConvert', 4294],
  ['data', 'converters', 'GraphMLConverter', 9800],
  ['data', 'converters', 'IDataConverter', 1314],
  ['data', 'converters', 'JSONConverter', 2220],
  ['data', 'DataField', '', 1759],
  ['data', 'DataSchema', '', 2165],
  ['data', 'DataSet', '', 586],
  ['data', 'DataSource', '', 3331],
  ['data', 'DataTable', '', 772],
  ['data', 'DataUtil', '', 3322],
  ['display', 'DirtySprite', '', 8833],
  ['display', 'LineSprite', '', 1732],
  ['display', 'RectSprite', '', 3623],
  ['display', 'TextSprite', '', 10066]
];

document.getElementById('columns').innerHTML =
  '<tr><th class="corner"><svg width="16" height="16"><path d="M16 0v16H0z" fill="#dddbde"/></svg></th>' +
  columns.map(c => `<th scope="col">${c}</th>`).join('') + '</tr>';

const blanks = '<td></td>'.repeat(columns.length - 6);
// Long names run over the empty cell to their right.
const wide = new Set(['FunctionSequence', 'ISchedulable', 'Transitioner', 'TransitionEvent', 'DataSchema', 'DataSource']);
const body = data.map(([group, second, third, size]) => {
  const cells = third
    ? `<td>${second}</td><td colspan="2">${third}</td>`
    : wide.has(second)
      ? `<td colspan="2">${second}</td><td></td>`
      : `<td>${second}</td><td></td><td></td>`;
  return `<td>flare</td><td>${group}</td>${cells}<td class="num">${size}</td>${blanks}`;
});
body.unshift(['node0', 'node1', 'node2', 'node3', 'node4', 'size'].map(t => `<td>${t}</td>`).join('') + blanks);
document.getElementById('rows').innerHTML =
  body.map((cells, i) => `<tr><th scope="row">${i + 1}</th>${cells}</tr>`).join('');

// Sunburst: for each ring, a start angle followed by [end angle, colour] arcs.
const C = {
  blue: '#aec7e8', mag: '#e377c2', green: '#98df8a', lav: '#ece6f2', yel: '#e9eab8', pyel: '#f3f3da',
  pink: '#fde4ee', rose: '#ffdde0', lil: '#f6d3ec', grn: '#bce0c0', peach: '#ffe3ca', gry: '#ececee',
  cyan: '#b3e9ed', brn: '#d9cacb', dgry: '#d4d4d5', tan: '#ecdfdc', lblue: '#dff0f8', sky: '#b5d3e8',
  red: '#f2b9bd', pur: '#dccfec', org: '#ffd6b0', lgrn: '#e0f6dc', mint: '#d5f3d2', lim: '#dfe79f'
};
const rings = [
  [1, 0, [360, 'blue']],
  [2, 0, [159.3, 'mag'], [222, 'lgrn'], [261.2, 'gry'], [313, 'org'], [326.5, 'dgry'], [337.5, 'yel'], [349, 'dgry'], [358.5, 'rose'], [360, 'pink']],
  [3, 0, [70.2, 'lav'], [113, 'yel'], [130, 'pyel'], [144, 'green'], [156.5, 'pink'], [159.3, 'sky'], [168.5, 'tan'], [175.6, 'pur'], [181.8, 'sky'],
    [186.7, 'gry'], [191, 'org'], [195, 'tan'], [199, 'lil'], [202.5, 'rose'], [206, 'yel'], [209.4, 'red'], [212.5, 'pur'], [215.7, 'lav'],
    [218, 'brn'], [219, 'lav'], [220.3, 'red'], [220.9, 'gry'], [221.4, 'brn'], [222, 'lgrn'], [231.3, 'cyan'], [239.4, 'pink'], [246, 'yel'],
    [249, 'lil'], [251.5, 'gry'], [254, 'pyel'], [256.3, 'brn'], [258, 'tan'], [261.3, 'lav'], [266.5, 'lblue'], [273.5, 'rose'],
    [275.3, 'pur'], [277, 'tan'], [278.5, 'lav'], [280.3, 'mint'], [282, 'lblue'], [283.5, 'gry'], [285, 'dgry'], [287, 'gry'], [288, 'rose'],
    [288.8, 'lim'], [289.5, 'pink'], [290.3, 'lil'], [291, 'gry'], [291.6, 'red'], [292.2, 'mint'], [292.8, 'gry'], [293.4, 'grn'], [294, 'rose'],
    [294.5, 'dgry'], [295.2, 'grn'], [305.5, 'rose'], [311, 'peach'], [313.5, 'pink'], [317, 'grn'], [318.5, 'sky'], [320, 'org'], [321, 'cyan'],
    [322.3, 'rose'], [323, 'lblue'], [324.5, 'pyel'], [325.5, 'lblue'], [332.6, 'pyel'], [334.3, 'grn'], [335.8, 'red'], [336.6, 'pyel'],
    [337.4, 'org'], [342, 'pyel'], [346.5, 'lblue'], [347.7, 'sky'], [348.4, 'pyel'], [349, 'cyan'], [349.6, 'pyel'], [353, 'tan'], [356.5, 'pur'], [357.8, 'brn'], [360, 'pink']],
  [4, 0, [41.5, 'lav'], [48, 'mint'], [54.6, 'dgry'], [59, 'brn'], [63.4, 'sky'], [66, 'red'], [67.3, 'rose'], [68.3, 'pur'], [68.8, 'mint'], [69.6, 'gry'], [70.2, 'grn'],
    [78, 'lav'], [86, 'brn'], [93.4, 'pink'], [97.3, 'pyel'], [101.3, 'tan'], [105, 'lblue'], [107.8, 'dgry'], [110.7, 'cyan'], [112, 'lil'],
    [115.5, 'pur'], [118, 'rose'], [120.3, 'red'], [122.8, 'grn'], [125.5, 'lblue'], [126.2, 'pyel'], [127.7, 'org'], [128.6, 'sky'], [129.2, 'gry'], [130, 'cyan'],
    [138.4, 'red'], [142, 'pur'], [144.5, 'rose'], [153.6, 'gry'], [156.3, 'lim'], [157.1, 'pyel'], [157.6, 'pur'], [158.4, 'sky'], [159.2, 'org'], [159.8, 'gry'], [160.4, 'grn']],
  [4, 186.8, [189.5, 'peach'], [190.2, 'red'], [190.8, 'pyel'], [191.4, 'grn']],
  [4, 195.6, [199, 'pink'], [199.5, 'dgry']],
  [4, 203, [204.6, 'lblue'], [205.6, 'pyel'], [206.3, 'cyan'], [206.9, 'sky']],
  [4, 222.8, [226.5, 'org'], [227, 'gry'], [227.6, 'sky'], [228.2, 'rose'], [228.7, 'red'], [229.2, 'mint'], [229.8, 'pur'], [230.4, 'red'], [231.2, 'grn']],
  [4, 261, [261.4, 'org']],
  [4, 295.6, [298.4, 'brn'], [299.5, 'rose'], [302, 'lav'], [303.5, 'pur'], [304.2, 'lblue'], [306.8, 'red'], [308, 'grn'], [308.7, 'pyel'], [309.6, 'mint'], [310.3, 'gry'], [313.5, 'dgry']],
  [4, 326.4, [329.5, 'lblue'], [331.3, 'cyan'], [331.8, 'lblue'], [332.5, 'pur']],
  [5, 0, [9, 'lblue'], [14.2, 'pink'], [17.7, 'lil'], [21.2, 'grn'], [24.9, 'peach'], [28, 'gry'], [31.2, 'cyan'], [33.8, 'brn'], [35.4, 'lim'],
    [37.6, 'dgry'], [38.5, 'tan'], [39.5, 'pyel'], [39.9, 'grn'], [40.5, 'sky'], [41.1, 'org'], [45.2, 'red'], [46.7, 'rose'], [47.8, 'pur'],
    [49, 'pyel'], [51, 'lim'], [52.6, 'gry'], [53, 'grn'], [53.6, 'cyan'], [56.5, 'lil'], [58, 'tan'], [60, 'rose'], [62, 'lblue'], [64, 'org']],
  [5, 105.8, [107.8, 'gry'], [108.8, 'lim']]
];
const center = [549, 359];
const radius = n => 99.3 * Math.sqrt(n);
const point = (r, deg) => {
  const a = deg * Math.PI / 180;
  return `${(center[0] + r * Math.sin(a)).toFixed(2)} ${(center[1] - r * Math.cos(a)).toFixed(2)}`;
};
const arc = (ring, from, to, color) => {
  const r0 = radius(ring), r1 = radius(ring + 1);
  if (to - from >= 360) {
    return `<circle cx="${center[0]}" cy="${center[1]}" r="${(r0 + r1) / 2}" fill="none" stroke="${color}" stroke-width="${r1 - r0}"/>`;
  }
  const large = to - from > 180 ? 1 : 0;
  return `<path fill="${color}" d="M${point(r0, from)}L${point(r1, from)}A${r1} ${r1} 0 ${large} 1 ${point(r1, to)}L${point(r0, to)}A${r0} ${r0} 0 ${large} 0 ${point(r0, from)}"/>`;
};
document.getElementById('sunburst').innerHTML = rings.map(([ring, start, ...arcs]) => {
  let from = start;
  return arcs.map(([to, name]) => {
    const shape = arc(ring, from, to, C[name]);
    from = to;
    return shape;
  }).join('');
}).join('');
```
